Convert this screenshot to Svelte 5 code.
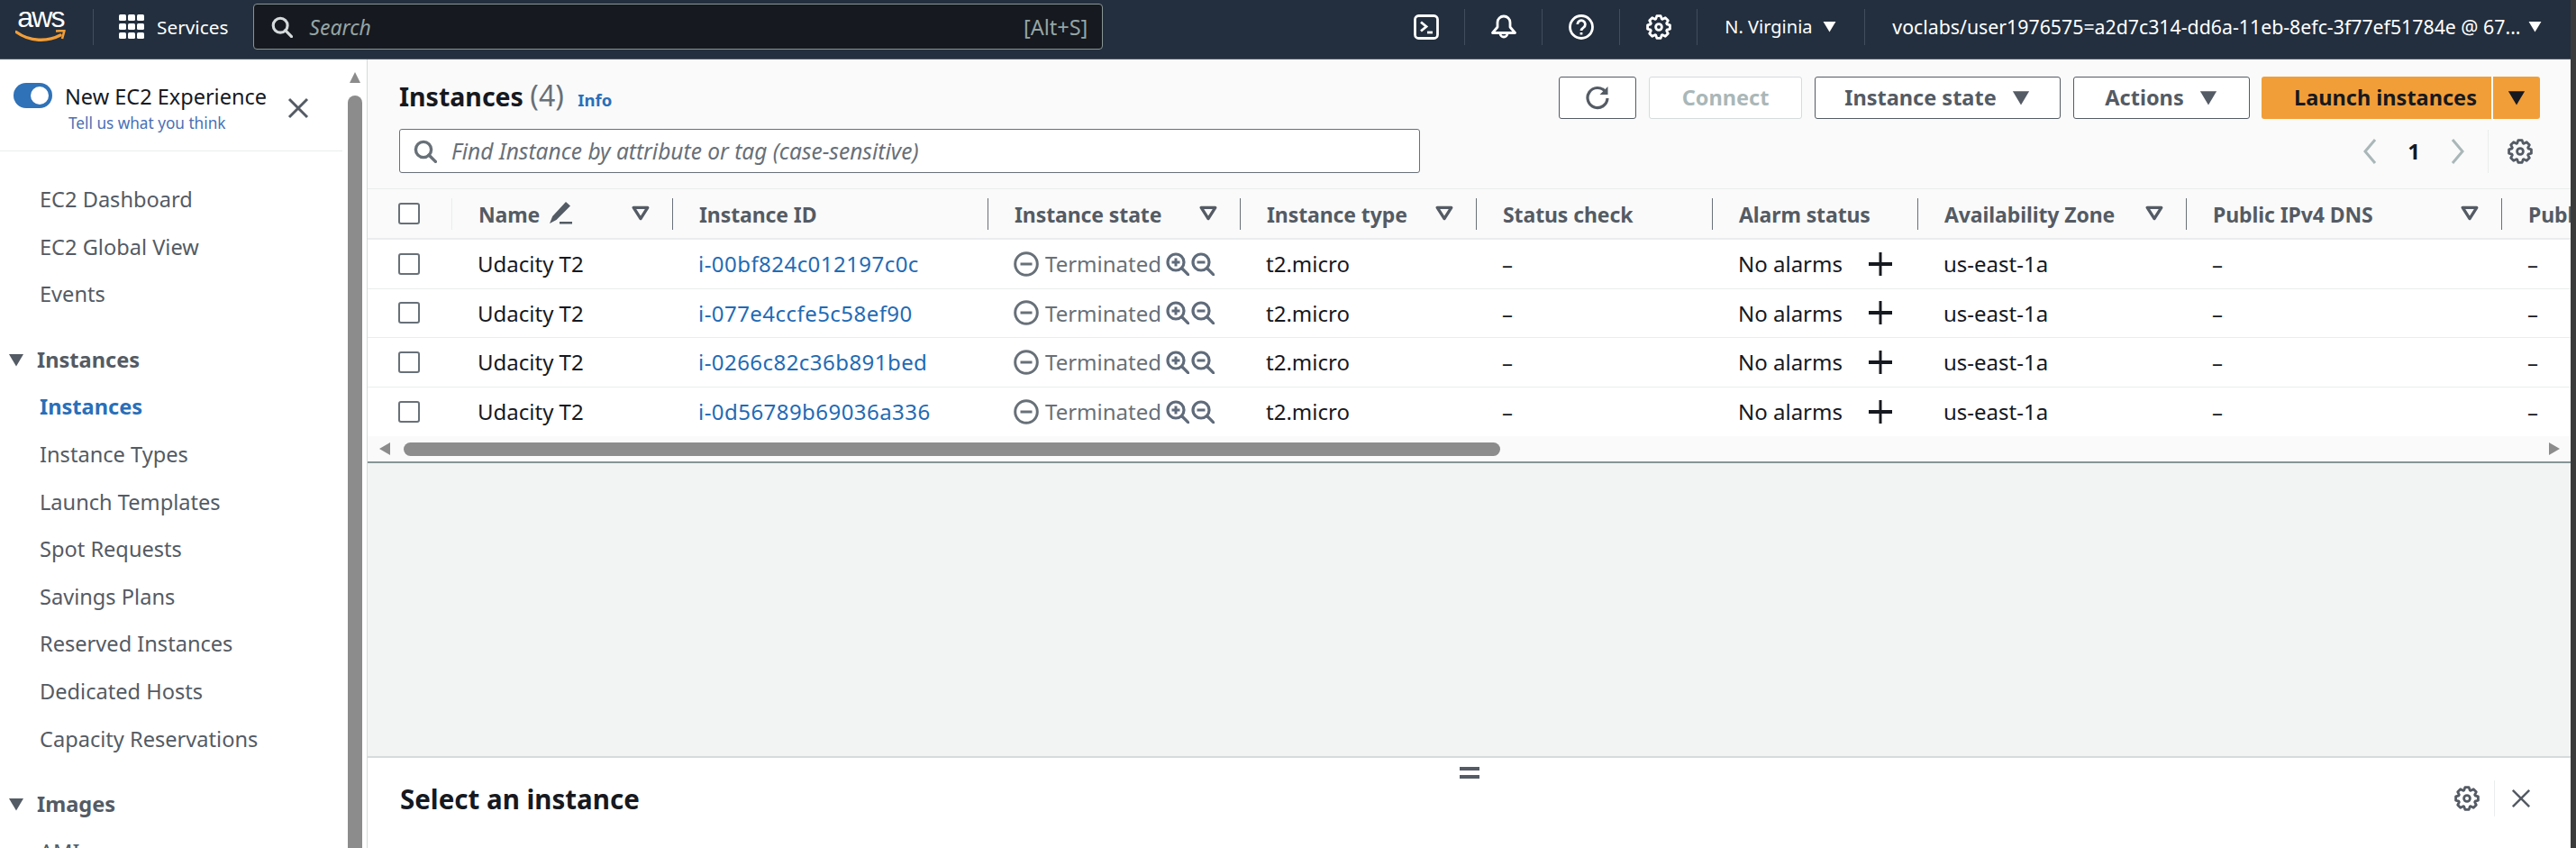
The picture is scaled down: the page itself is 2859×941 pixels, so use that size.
<script lang="ts">
	const navGroups = [
		{ items: ['EC2 Dashboard', 'EC2 Global View', 'Events'] },
		{
			title: 'Instances',
			items: [
				'Instances',
				'Instance Types',
				'Launch Templates',
				'Spot Requests',
				'Savings Plans',
				'Reserved Instances',
				'Dedicated Hosts',
				'Capacity Reservations'
			]
		},
		{ title: 'Images', items: ['AMIs'] }
	];

	const columns = [
		{ label: 'Name', filter: true, edit: true },
		{ label: 'Instance ID' },
		{ label: 'Instance state', filter: true },
		{ label: 'Instance type', filter: true },
		{ label: 'Status check' },
		{ label: 'Alarm status' },
		{ label: 'Availability Zone', filter: true },
		{ label: 'Public IPv4 DNS', filter: true },
		{ label: 'Publ' }
	];

	const instanceIds = [
		'i-00bf824c012197c0c',
		'i-077e4ccfe5c58ef90',
		'i-0266c82c36b891bed',
		'i-0d56789b69036a336'
	];

	// Eight-tooth cog outline on a 28 unit box.
	function cogOutline() {
		const pts = [];
		for (let i = 0; i < 8; i++) {
			const mid = (i * Math.PI) / 4 - Math.PI / 2;
			for (const [r, off] of [[9.6, -0.34], [12.6, -0.17], [12.6, 0.17], [9.6, 0.34]]) {
				const a = mid + off;
				pts.push(`${(14 + r * Math.cos(a)).toFixed(2)} ${(14 + r * Math.sin(a)).toFixed(2)}`);
			}
		}
		return 'M' + pts.join('L') + 'Z';
	}
	const cog = cogOutline();
</script>

{#snippet gear(cls: string)}
	<svg class={cls} viewBox="0 0 28 28" fill="none" stroke="currentColor" stroke-width="2.8" stroke-linejoin="round" aria-hidden="true">
		<path d={cog} />
		<circle cx="14" cy="14" r="3.4" />
	</svg>
{/snippet}

{#snippet lens(cls: string)}
	<svg class={cls} viewBox="0 0 26 26" fill="none" stroke="currentColor" stroke-width="3.4" aria-hidden="true">
		<circle cx="11" cy="11" r="8.6" />
		<path d="M17 17l7.4 7.4" stroke-linecap="round" />
	</svg>
{/snippet}

{#snippet caret(cls: string)}
	<svg class={cls} viewBox="0 0 16 14" fill="currentColor" aria-hidden="true">
		<path d="M0.5 1h15L8 13.5z" />
	</svg>
{/snippet}

{#snippet zoomLens(plus: boolean)}
	<svg class="zoom-icon" viewBox="0 0 26 26" fill="none" stroke="currentColor" stroke-width="3.2" aria-hidden="true">
		<circle cx="11" cy="11" r="9" />
		<path d="M18 18l7 7" stroke-linecap="round" />
		<path d="M6.5 11h9" stroke-width="3" />
		{#if plus}<path d="M11 6.5v9" stroke-width="3" />{/if}
	</svg>
{/snippet}

<div class="page">
	<div class="window">
		<header class="topbar">
			<div class="logo">
				<span class="logo__word">aws</span>
				<svg class="logo__smile" viewBox="0 0 56 14" fill="none" aria-hidden="true">
					<path d="M1 2.5c15 11 35 11 49 3.500" stroke="#f29d38" stroke-width="3.4" stroke-linecap="round" />
					<path d="M45 1.500l9.500-.5-2.500 9" stroke="#f29d38" stroke-width="2.600" stroke-linejoin="round" />
				</svg>
			</div>
			<span class="topbar__rule topbar__rule--logo"></span>
			<div class="services">
				<span class="services__grid" aria-hidden="true">
					{#each Array(9) as _}<i></i>{/each}
				</span>
				<span>Services</span>
			</div>
			<div class="global-search">
				{@render lens('global-search__icon')}
				<span class="global-search__hint">Search</span>
				<span class="global-search__key">[Alt+S]</span>
			</div>
			<div class="topbar__tools">
				<span class="tool">
					<svg class="tool__icon" viewBox="0 0 28 28" fill="none" stroke="#fff" stroke-width="2.800" aria-hidden="true">
						<rect x="1.500" y="1.500" width="25" height="25" rx="4" />
						<path d="M8 8.500l6 5-6 5" />
						<path d="M15 20h6" />
					</svg>
				</span>
				<span class="tool">
					<svg class="tool__icon" viewBox="0 0 28 28" fill="none" stroke="#fff" stroke-width="2.800" stroke-linejoin="round" aria-hidden="true">
						<path d="M1.500 20.500L7 14V9a7 7 0 0 1 14 0v5l5.500 6.500z" />
						<path d="M10 21a4 4 0 0 0 8 0" />
					</svg>
				</span>
				<span class="tool">
					<svg class="tool__icon" viewBox="0 0 28 28" fill="none" stroke="#fff" stroke-width="2.800" aria-hidden="true">
						<circle cx="14" cy="14" r="12.500" />
						<path d="M9.800 11a4.300 4.300 0 1 1 6.600 3.600c-1.500 1-2.400 1.600-2.400 3.400" />
						<path d="M14 20v2.500" />
					</svg>
				</span>
				<span class="tool tool--cog">{@render gear('tool__icon')}</span>
				<span class="menu menu--region">N. Virginia {@render caret('menu__caret')}</span>
				<span class="menu menu--user">voclabs/user1976575=a2d7c314-dd6a-11eb-8efc-3f77ef51784e @ 67... {@render caret('menu__caret')}</span>
			</div>
		</header>

		<div class="shell">
			<aside class="sidebar">
				<div class="sidebar__inner">
					<div class="experience">
						<span class="switch"><i></i></span>
						<div class="experience__text">
							<span class="experience__title">New EC2 Experience</span>
							<span class="experience__link">Tell us what you think</span>
						</div>
						<svg class="experience__close" viewBox="0 0 24 24" stroke="#545b64" stroke-width="3" aria-hidden="true">
							<path d="M2 2l20 20M22 2L2 22" />
						</svg>
					</div>
					<nav>
						{#each navGroups as group}
							<div class="nav-group">
								{#if group.title}
									<div class="nav-group__title">
										{@render caret('nav-group__caret')}
										{group.title}
									</div>
								{/if}
								{#each group.items as item, i}
									<a class="nav-link" class:is-active={group.title === 'Instances' && i === 0} href="#top">{item}</a>
								{/each}
							</div>
						{/each}
					</nav>
				</div>
				<div class="sidebar__scroll">
					<svg class="sidebar__arrow" viewBox="0 0 16 12" fill="#8c8c8c" aria-hidden="true"><path d="M8 0l6 12H2z" /></svg>
					<span class="sidebar__thumb"></span>
				</div>
			</aside>

			<main class="main">
				<section class="instances">
					<div class="toolbar">
						<h1>Instances <span class="count">(4)</span> <a class="info" href="#top">Info</a></h1>
						<div class="actions">
							<button class="btn btn--icon" aria-label="Refresh">
								<svg viewBox="0 0 28 28" fill="none" stroke="currentColor" stroke-width="3.200" aria-hidden="true">
									<path d="M22.500 6.500A11 11 0 1 0 25 14" />
									<path d="M25.500 1v9h-9" fill="currentColor" stroke="none" />
								</svg>
							</button>
							<button class="btn btn--connect" disabled>Connect</button>
							<button class="btn btn--state">Instance state {@render caret('btn__caret')}</button>
							<button class="btn btn--actions">Actions {@render caret('btn__caret')}</button>
							<div class="launch">
								<button class="btn btn--launch">Launch instances</button>
								<button class="btn btn--launch-menu" aria-label="More launch options">{@render caret('btn__caret')}</button>
							</div>
						</div>
					</div>

					<div class="filterbar">
						<div class="find">
							{@render lens('find__icon')}
							<span>Find Instance by attribute or tag (case-sensitive)</span>
						</div>
						<div class="pager">
							<svg class="pager__arrow" viewBox="0 0 16 30" fill="none" stroke="#aab7b8" stroke-width="3" aria-hidden="true"><path d="M14 2L3 15l11 13" /></svg>
							<span class="pager__num">1</span>
							<svg class="pager__arrow" viewBox="0 0 16 30" fill="none" stroke="#aab7b8" stroke-width="3" aria-hidden="true"><path d="M2 2l11 13L2 28" /></svg>
							<span class="pager__rule">{@render gear('pager__gear')}</span>
						</div>
					</div>

					<div class="table">
						<div class="row row--head">
							<div class="cell cell--check"><span class="checkbox"></span></div>
							{#each columns as col, c}
								<div class="cell cell--head" class:cell--soft={c === 0}>
									<span class="cell__label">{col.label}</span>
									{#if col.edit}
										<svg class="edit-icon" viewBox="0 0 26 26" fill="#545b64" aria-hidden="true">
											<path d="M19 1l5 4.500L8.500 21 1 25l3.200-8z" />
											<path d="M12 23h14v2.500H12z" />
										</svg>
									{/if}
									{#if col.filter}
										<svg class="filter-icon" viewBox="0 0 18 15" fill="none" stroke="#545b64" stroke-width="3" stroke-linejoin="round" aria-hidden="true">
											<path d="M2 2h14L9 13z" />
										</svg>
									{/if}
								</div>
							{/each}
						</div>
						{#each instanceIds as id}
							<div class="row">
								<div class="cell cell--check"><span class="checkbox"></span></div>
								<div class="cell">Udacity T2</div>
								<div class="cell"><a class="id-link" href="#top">{id}</a></div>
								<div class="cell cell--state">
									<svg class="state-icon" viewBox="0 0 28 28" fill="none" stroke="currentColor" stroke-width="3" aria-hidden="true">
										<circle cx="14" cy="14" r="12.300" />
										<path d="M7.500 14h13" />
									</svg>
									<span class="state-text">Terminated</span>
									{@render zoomLens(true)}
									{@render zoomLens(false)}
								</div>
								<div class="cell">t2.micro</div>
								<div class="cell">–</div>
								<div class="cell cell--alarm">
									<span>No alarms</span>
									<svg class="plus-icon" viewBox="0 0 26 26" fill="#16191f" aria-hidden="true">
										<path d="M11.500 0h3v26h-3z" />
										<path d="M0 11h26v4H0z" />
									</svg>
								</div>
								<div class="cell">us-east-1a</div>
								<div class="cell">–</div>
								<div class="cell">–</div>
							</div>
						{/each}
					</div>

					<div class="hscroll">
						<svg class="hscroll__arrow" viewBox="0 0 12 16" fill="#8c8c8c" aria-hidden="true"><path d="M0 8l12-7v14z" /></svg>
						<span class="hscroll__thumb"></span>
						<svg class="hscroll__arrow hscroll__arrow--end" viewBox="0 0 12 16" fill="#8c8c8c" aria-hidden="true"><path d="M12 8L0 1v14z" /></svg>
					</div>
				</section>

				<div class="gutter"></div>

				<section class="detail">
					<div class="detail__handle"><i></i><i></i></div>
					<div class="detail__head">
						<h2>Select an instance</h2>
						<div class="detail__tools">
							{@render gear('detail__gear')}
							<span class="detail__rule"></span>
							<svg class="detail__close" viewBox="0 0 24 24" stroke="#545b64" stroke-width="2.800" aria-hidden="true">
								<path d="M2 2l20 20M22 2L2 22" />
							</svg>
						</div>
					</div>
				</section>
			</main>
		</div>
	</div>
	<div class="edge"></div>
</div>

<style>
	:global(body) {
		margin: 0;
		overflow: hidden;
		background: #fff;
	}

	.page {
		display: flex;
		height: 941px;
		overflow: hidden;
		font-family: 'Noto Sans', 'Open Sans', sans-serif;
		font-size: 24px;
		color: #16191f;
	}

	.window {
		flex: 1;
		min-width: 0;
		display: flex;
		flex-direction: column;
	}

	.edge {
		width: 6px;
		background: #3b3b3b;
	}

	/* Top bar */
	.topbar {
		box-sizing: border-box;
		height: 66px;
		flex-shrink: 0;
		padding-bottom: 6px;
		display: flex;
		align-items: center;
		background: #232f3e;
		border-bottom: 1px solid #545b64;
		color: #fff;
		font-size: 21px;
	}

	.logo {
		align-self: flex-start;
		width: 56px;
		margin: 6px 0 0 17px;
		display: flex;
		flex-direction: column;
		align-items: center;
	}

	.logo__word {
		font-family: 'Liberation Sans', sans-serif;
		font-size: 32px;
		line-height: 26px;
		letter-spacing: -1.8px;
		height: 22px;
	}

	.logo__smile {
		width: 56px;
		height: 14px;
		margin-top: 5px;
	}

	.topbar__rule {
		width: 1px;
		height: 40px;
		background: #414d5c;
	}

	.topbar__rule--logo {
		margin-left: 30px;
	}

	.services {
		display: flex;
		align-items: center;
		gap: 14px;
		margin-left: 28px;
		font-size: 20.800px;
	}

	.services__grid {
		display: grid;
		grid-template-columns: repeat(3, 8px);
		grid-auto-rows: 7px;
		gap: 3px 2px;
	}

	.services__grid i {
		background: #fff;
		border-radius: 1.5px;
	}

	.global-search {
		box-sizing: border-box;
		flex-shrink: 0;
		width: 943px;
		height: 51px;
		margin-left: 28px;
		padding: 0 16px 0 19px;
		display: flex;
		align-items: center;
		background: #16191f;
		border: 1px solid #879596;
		border-radius: 4px;
		color: #95a5a6;
	}

	:global(.global-search__icon) {
		width: 24px;
		height: 24px;
		color: #d5dbdb;
	}

	.global-search__hint {
		margin-left: 18px;
		font-style: italic;
		font-size: 23px;
		flex: 1;
	}

	.global-search__key {
		font-size: 23.500px;
	}

	.topbar__tools {
		margin-left: 316px;
		display: flex;
		align-items: center;
	}

	.tool {
		box-sizing: border-box;
		width: 86px;
		height: 40px;
		display: flex;
		align-items: center;
		justify-content: center;
		border-right: 1px solid #414d5c;
	}

	:global(.tool__icon) {
		width: 28px;
		height: 28px;
		color: #fff;
	}

	.menu {
		display: flex;
		align-items: center;
		gap: 8px;
		height: 40px;
		white-space: nowrap;
		font-size: 21.300px;
	}

	.menu--region {
		box-sizing: border-box;
		width: 186px;
		padding-left: 30px;
		gap: 11px;
		border-right: 1px solid #414d5c;
		font-size: 20px;
	}

	.menu--user {
		padding-left: 30px;
	}

	:global(.menu__caret) {
		width: 15px;
		height: 13px;
		flex-shrink: 0;
	}

	/* Sidebar */
	.shell {
		flex: 1;
		min-height: 0;
		display: flex;
	}

	.sidebar {
		flex: 0 0 408px;
		box-sizing: border-box;
		display: flex;
		background: #fff;
		border-right: 1px solid #d5dbdb;
	}

	.sidebar__inner {
		width: 386px;
		overflow: hidden;
		font-size: 23.600px;
	}

	.sidebar__scroll {
		width: 16px;
		padding-top: 14px;
		display: flex;
		flex-direction: column;
		align-items: center;
	}

	.sidebar__arrow {
		width: 16px;
		height: 12px;
		flex-shrink: 0;
	}

	.sidebar__thumb {
		flex: 1;
		width: 16px;
		margin-top: 14px;
		background: #8c8c8c;
		border-radius: 8px 8px 0 0;
	}

	.experience {
		box-sizing: border-box;
		height: 102px;
		width: 380px;
		padding: 26px 0 0 15px;
		display: flex;
		align-items: flex-start;
		border-bottom: 1px solid #eaeded;
	}

	.switch {
		box-sizing: border-box;
		width: 43px;
		height: 28px;
		padding: 4px;
		display: flex;
		justify-content: flex-end;
		background: #2f72b8;
		border-radius: 14px;
	}

	.switch i {
		width: 20px;
		height: 20px;
		background: #fff;
		border-radius: 50%;
	}

	.experience__text {
		display: flex;
		flex-direction: column;
		width: 223px;
		margin-left: 14px;
		white-space: nowrap;
	}

	.experience__title {
		font-size: 23.500px;
		line-height: 30px;
	}

	.experience__link {
		margin: 3px 0 0 4px;
		font-size: 17.200px;
		line-height: 24px;
		color: #4a6fb5;
	}

	.experience__close {
		width: 24px;
		height: 24px;
		margin: 16px 0 0 24px;
	}

	.nav-group {
		display: flex;
		flex-direction: column;
		margin-top: 20px;
	}

	.nav-group:first-child {
		margin-top: 27px;
	}

	.nav-group__title {
		display: flex;
		align-items: center;
		gap: 14px;
		height: 52.6px;
		padding-left: 9px;
		font-weight: 700;
		color: #545b64;
	}

	:global(.nav-group__caret) {
		width: 18px;
		height: 15px;
		color: #545b64;
	}

	.nav-link {
		height: 52.6px;
		line-height: 52.6px;
		padding-left: 44px;
		color: #545b64;
		text-decoration: none;
	}

	.nav-link.is-active {
		color: #2a6fb9;
		font-weight: 700;
	}

	/* Instances panel */
	.main {
		flex: 1;
		min-width: 0;
		display: flex;
		flex-direction: column;
		background: #f2f3f3;
	}

	.instances {
		background: #fafafa;
		border-bottom: 2px solid #879596;
	}

	.toolbar {
		box-sizing: border-box;
		height: 66px;
		display: flex;
		align-items: flex-end;
		justify-content: space-between;
		padding: 0 34px 0 35px;
	}

	h1 {
		margin: 0 0 4px;
		font-size: 28.500px;
		font-weight: 700;
		line-height: 45px;
		height: 45px;
		white-space: nowrap;
	}

	.count {
		font-size: 32px;
		font-weight: 400;
		color: #687078;
	}

	.info {
		margin-left: 8px;
		font-size: 18.500px;
		font-weight: 700;
		color: #2a6fb9;
		text-decoration: none;
	}

	.actions {
		display: flex;
		gap: 14px;
	}

	.btn {
		box-sizing: border-box;
		height: 47px;
		padding: 0 0 2px;
		display: flex;
		align-items: center;
		justify-content: center;
		gap: 16px;
		background: #fff;
		border: 1px solid #545b64;
		border-radius: 3px;
		font: 700 23.500px 'Noto Sans', sans-serif;
		color: #545b64;
	}

	.btn--icon {
		width: 86px;
		padding: 0;
	}

	.btn--icon svg {
		width: 28px;
		height: 28px;
	}

	.btn--connect {
		width: 170px;
		border-color: #d5dbdb;
		color: #aab7b8;
	}

	.btn--state {
		width: 273px;
	}

	.btn--actions {
		width: 196px;
	}

	:global(.btn__caret) {
		width: 22px;
		height: 17px;
		margin-top: 2px;
	}

	.launch {
		display: flex;
		gap: 2px;
		margin-left: -1px;
	}

	.btn--launch {
		width: 255px;
		padding-left: 20px;
		background: #f29e38;
		border: none;
		border-radius: 3px 0 0 3px;
		color: #16191f;
	}

	.btn--launch-menu {
		width: 52px;
		background: #f29e38;
		border: none;
		border-radius: 0 3px 3px 0;
		color: #16191f;
	}

	.filterbar {
		display: flex;
		align-items: center;
		justify-content: space-between;
		height: 49px;
		margin-top: 11px;
		padding: 0 42px 0 35px;
	}

	.find {
		box-sizing: border-box;
		width: 1133px;
		height: 49px;
		padding-left: 15px;
		display: flex;
		align-items: center;
		gap: 16px;
		background: #fff;
		border: 1px solid #687078;
		border-radius: 3px;
		color: #687078;
		font-style: italic;
		font-size: 24.500px;
	}

	:global(.find__icon) {
		width: 26px;
		height: 26px;
		color: #687078;
	}

	.pager {
		display: flex;
		align-items: center;
		height: 48px;
	}

	.pager__arrow {
		width: 16px;
		height: 30px;
	}

	.pager__num {
		width: 82px;
		text-align: center;
		font-weight: 700;
	}

	.pager__rule {
		display: flex;
		align-items: center;
		height: 48px;
		margin-left: 25px;
		padding-left: 21px;
		border-left: 1px solid #eaeded;
	}

	:global(.pager__gear) {
		width: 28px;
		height: 28px;
		color: #545b64;
	}

	/* Table */
	.table {
		margin-top: 17px;
		border-top: 1px solid #eaeded;
		overflow: hidden;
		background: #fff;
	}

	.row {
		display: grid;
		grid-template-columns: 93px 245px 350px 280px 262px 262px 228px 298px 350px 100px;
		align-items: center;
		height: 54.500px;
		box-sizing: border-box;
		border-bottom: 1px solid #eaeded;
	}

	.row:last-child {
		border-bottom: none;
	}

	.row--head {
		height: 56px;
		background: #fafafa;
		border-bottom: 2px solid #eaeded;
	}

	.cell {
		box-sizing: border-box;
		min-width: 0;
		padding-left: 29px;
		display: flex;
		align-items: center;
		white-space: nowrap;
		overflow: hidden;
	}

	.cell--check {
		padding-left: 34px;
	}

	.checkbox {
		box-sizing: border-box;
		width: 24px;
		height: 24px;
		background: #fff;
		border: 2px solid #687078;
		border-radius: 3px;
	}

	.cell--head {
		height: 35px;
		padding-top: 2px;
		padding-right: 25px;
		border-left: 1px solid #687078;
		font-size: 23px;
		letter-spacing: -0.1px;
		font-weight: 700;
		color: #545b64;
	}

	.cell--soft {
		border-left-color: #eaeded;
	}

	.edit-icon {
		width: 26px;
		height: 26px;
		margin: -4px 0 0 10px;
	}

	.filter-icon {
		width: 20px;
		height: 17px;
		margin: -3px 0 0 auto;
		flex-shrink: 0;
	}

	.id-link {
		color: #1f6bb5;
		text-decoration: none;
		letter-spacing: 0.45px;
	}

	.cell--state {
		color: #687078;
	}

	.state-icon {
		width: 28px;
		height: 28px;
		flex-shrink: 0;
		margin-right: 7px;
	}

	.state-text {
		width: 134px;
	}

	.zoom-icon {
		width: 26px;
		height: 26px;
		margin-right: 2px;
		flex-shrink: 0;
		color: #5f6b7a;
	}

	.plus-icon {
		width: 26px;
		height: 26px;
		margin-left: 29px;
		flex-shrink: 0;
	}

	.hscroll {
		display: flex;
		align-items: center;
		height: 28px;
		padding: 0 12px 0 13px;
	}

	.hscroll__arrow {
		width: 12px;
		height: 16px;
		flex-shrink: 0;
	}

	.hscroll__thumb {
		width: 1217px;
		height: 15px;
		margin-left: 15px;
		background: #8c8c8c;
		border-radius: 8px;
	}

	.hscroll__arrow--end {
		margin-left: auto;
	}

	.gutter {
		flex: 1;
	}

	/* Split panel */
	.detail {
		box-sizing: border-box;
		height: 102px;
		flex-shrink: 0;
		background: #fff;
		border-top: 2px solid #d5dbdb;
		overflow: hidden;
	}

	.detail__handle {
		display: flex;
		flex-direction: column;
		gap: 5px;
		width: 22px;
		margin: 10px 0 0 1212px;
	}

	.detail__handle i {
		height: 4px;
		background: #545b64;
	}

	.detail__head {
		display: flex;
		align-items: center;
		justify-content: space-between;
		height: 40px;
		margin-top: 2px;
		padding: 0 44px 0 36px;
	}

	h2 {
		margin: 0;
		font-size: 29.500px;
		font-weight: 700;
	}

	.detail__tools {
		display: flex;
		align-items: center;
		color: #545b64;
	}

	:global(.detail__gear) {
		width: 28px;
		height: 28px;
	}

	.detail__rule {
		width: 1px;
		height: 40px;
		margin: 0 18px 0 16px;
		background: #eaeded;
	}

	.detail__close {
		width: 22px;
		height: 24px;
	}
</style>
